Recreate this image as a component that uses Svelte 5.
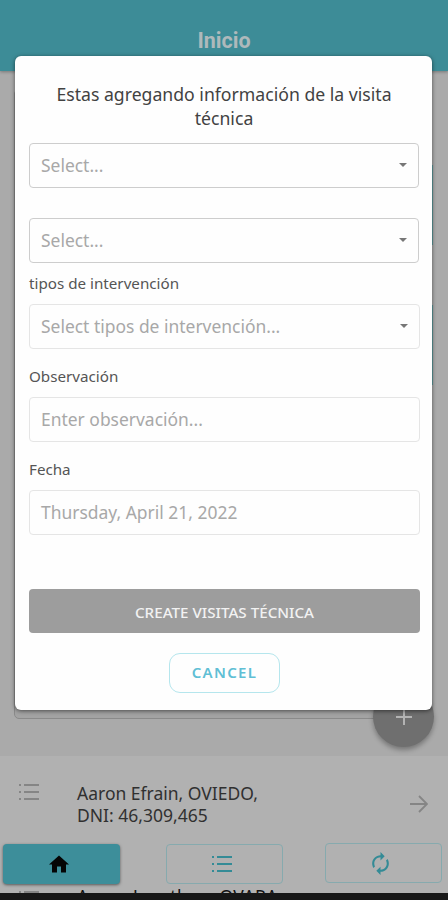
<script>
	const fields = [
		{ label: '', placeholder: 'Select...', select: true },
		{ label: '', placeholder: 'Select...', select: true },
		{ label: 'tipos de intervención', placeholder: 'Select tipos de intervención...', select: true },
		{ label: 'Observación', placeholder: 'Enter observación...', select: false },
		{ label: 'Fecha', placeholder: 'Thursday, April 21, 2022', select: false }
	];
</script>

{#snippet listIcon()}
	<svg class="list-icon" viewBox="0 0 20 16" fill="currentColor">
		<path d="M0 0h2v2H0zM5 0h15v2H5zM0 7h2v2H0zM5 7h15v2H5zM0 14h2v2H0zM5 14h15v2H5z" />
	</svg>
{/snippet}

<div class="screen">
	<header>Inicio</header>
	<div class="card">
		<div class="option"></div>
		<div class="option"></div>
	</div>

	<main class="people">
		<div class="person">
			{@render listIcon()}
			<p>Aaron Efrain, OVIEDO,<br />DNI: 46,309,465</p>
			<svg class="arrow" viewBox="0 0 18 18" fill="none" stroke="currentColor" stroke-width="1.8">
				<path d="M0 9h17M9 1l8 8-8 8" />
			</svg>
		</div>
		<div class="person next">
			{@render listIcon()}
			<p>Aaron Jonathan, OVARA,</p>
		</div>
	</main>

	<div class="fab">
		<svg viewBox="0 0 16 16" stroke="currentColor" stroke-width="2"><path d="M8 0v16M0 8h16" /></svg>
	</div>

	<nav>
		<button class="active" aria-label="Inicio">
			<svg viewBox="2 3 20 17" width="20" height="18" fill="currentColor"><path d="M10 20v-6h4v6h5v-8h3L12 3 2 12h3v8z" /></svg>
		</button>
		<button class="list" aria-label="Lista">{@render listIcon()}</button>
		<button class="refresh" aria-label="Actualizar">
			<svg viewBox="0 0 24 24" width="25" height="25" fill="currentColor">
				<path d="M12 6v3l4-4-4-4v3c-4.42 0-8 3.58-8 8 0 1.57.46 3.03 1.24 4.26L6.7 14.8A5.87 5.87 0 0 1 6 12c0-3.31 2.69-6 6-6zm6.76 1.74L17.3 9.2c.44.84.7 1.79.7 2.8 0 3.31-2.69 6-6 6v-3l-4 4 4 4v-3c4.42 0 8-3.58 8-8 0-1.57-.46-3.03-1.24-4.26z" />
			</svg>
		</button>
	</nav>
	<div class="system-bar"></div>

	<div class="modal">
		<h1>Estas agregando información de la visita técnica</h1>
		{#each fields as field}
			<div class="field" class:plain={!field.label}>
				{#if field.label}<span class="label">{field.label}</span>{/if}
				<div class="input">
					<span>{field.placeholder}</span>
					{#if field.select}<i class="caret"></i>{/if}
				</div>
			</div>
		{/each}
		<button class="submit">CREATE VISITAS TÉCNICA</button>
		<button class="cancel">CANCEL</button>
	</div>
</div>

<style>
	:global(body) {
		margin: 0;
	}

	.screen {
		position: relative;
		width: 448px;
		height: 900px;
		overflow: hidden;
		background: #aaa;
		font-family: 'Noto Sans', sans-serif;
	}

	button {
		box-sizing: border-box;
		padding: 0;
		font-family: inherit;
	}

	svg {
		display: block;
	}

	header {
		box-sizing: border-box;
		height: 71px;
		padding-top: 28px;
		background: #3d8c97;
		color: #aeb9bb;
		font: bold 21.5px/25px Roboto, sans-serif;
		text-align: center;
		box-shadow: 0 1px 3px rgba(0, 0, 0, 0.3);
	}

	.card {
		box-sizing: border-box;
		height: 630px;
		margin: 18px 16px 0 14px;
		padding-top: 75px;
		border: 1px solid #8a8a8a;
		border-radius: 5px;
		background: #a3a3a3;
	}

	.option {
		height: 80px;
		margin: 0 -2px 60px 0;
		background: #5f9a9c;
	}

	.people {
		height: 144px;
		margin-top: 37px;
		background: #b1b1b1;
		overflow: hidden;
	}

	.person {
		display: flex;
		height: 98px;
		padding: 0 20px 0 19px;
		color: #303030;
	}

	.person p {
		flex: 1;
		margin: 26px 0 0 38px;
		font-size: 17.5px;
		line-height: 22px;
	}

	.list-icon {
		width: 20px;
		height: 16px;
	}

	.person .list-icon {
		margin-top: 28px;
		color: #858585;
	}

	.next .list-icon {
		margin-top: 37px;
	}

	.person.next p {
		margin-top: 31px;
		color: #111;
		letter-spacing: 0.35px;
	}

	.arrow {
		width: 18px;
		height: 18px;
		margin-top: 39px;
		color: #858585;
	}

	.fab {
		position: absolute;
		top: 686px;
		left: 373px;
		display: grid;
		place-items: center;
		width: 61px;
		height: 61px;
		border-radius: 50%;
		background: #6f6f6f;
		color: #b3b3b3;
		box-shadow: 0 3px 5px rgba(0, 0, 0, 0.3);
	}

	.fab svg {
		width: 16px;
		height: 16px;
	}

	nav {
		position: absolute;
		top: 843px;
		left: 3px;
		display: flex;
		align-items: flex-end;
		height: 41px;
	}

	nav button {
		display: grid;
		place-items: center;
		width: 117px;
		height: 40px;
		padding-right: 6px;
		border: 1px solid #86aaae;
		border-radius: 4px;
		background: #b1b1b1;
		color: #348b96;
	}

	nav .active {
		border: 0;
		background: #3d8e9a;
		color: #050505;
		box-shadow: 0 1px 3px rgba(0, 0, 0, 0.5);
	}

	nav .list {
		margin-left: 46px;
	}

	nav .refresh {
		align-self: flex-start;
		margin-left: 42px;
	}

	.system-bar {
		position: absolute;
		bottom: 0;
		width: 100%;
		height: 7px;
		background: #171717;
	}

	.modal {
		position: absolute;
		top: 56px;
		left: 15px;
		box-sizing: border-box;
		display: flex;
		flex-direction: column;
		width: 417px;
		height: 654px;
		padding: 26px 12px 0 14px;
		border-radius: 6px;
		background: #fefefe;
		box-shadow: 0 1px 4px rgba(0, 0, 0, 0.55);
	}

	h1 {
		margin: 0 0 13px;
		padding: 0 20px 0 19px;
		color: #424242;
		font-size: 17.65px;
		font-weight: 400;
		line-height: 24px;
		text-align: center;
	}

	.field {
		margin-bottom: 17px;
	}

	.field.plain {
		margin: 0 1px 30px 0;
	}

	.plain + .plain {
		margin-bottom: 9px;
	}

	.label {
		display: block;
		height: 31px;
		color: #555;
		font-size: 15.2px;
		line-height: 20px;
	}

	.plain + .field:not(.plain) .label {
		height: 32px;
		line-height: 22px;
	}

	.input {
		box-sizing: border-box;
		display: flex;
		align-items: center;
		justify-content: space-between;
		height: 45px;
		padding: 0 11px 1px;
		border: 1px solid #e5e5e5;
		border-radius: 4px;
		color: #a8a8a8;
		font-size: 17.45px;
	}

	.plain .input {
		border-color: #cdcdcd;
	}

	.caret {
		border: 4.5px solid transparent;
		border-top-color: #777;
		border-bottom: 0;
	}

	.submit {
		height: 44px;
		margin-top: 37px;
		padding-top: 1px;
		border: 0;
		border-radius: 4px;
		background: #9d9d9d;
		color: #f2f2f2;
		font-size: 15.2px;
		font-weight: 500;
	}

	.cancel {
		align-self: center;
		width: 111px;
		height: 40px;
		margin: 20px 0 0;
		padding-bottom: 2px;
		border: 1px solid #b5e6ed;
		border-radius: 11px;
		background: #fefefe;
		color: #60bfd5;
		font-size: 15px;
		font-weight: 600;
		letter-spacing: 1.3px;
	}
</style>
